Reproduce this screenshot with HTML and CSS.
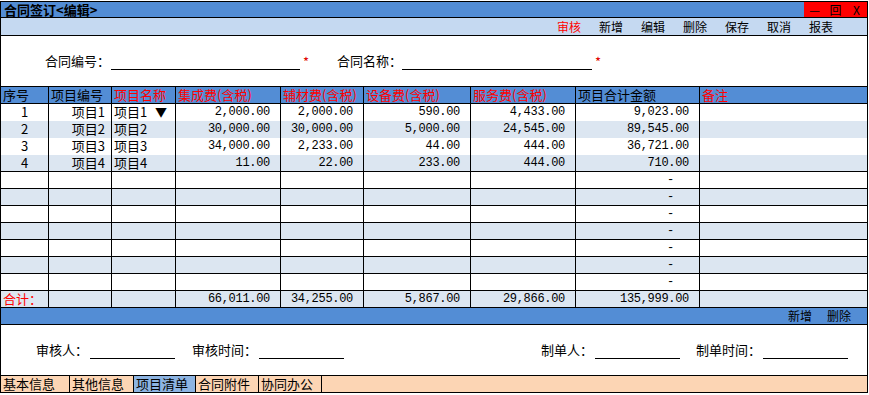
FILE: index.html
```html
<!DOCTYPE html>
<html lang="zh-CN">
<head>
  <meta charset="UTF-8">
  <title>合同签订</title>
  <link rel="stylesheet" href="styles.css">
</head>
<body>
  <div class="window">
    <div class="titlebar">
      <span class="title">合同签订&lt;编辑&gt;</span>
      <div class="winctl"><span>—</span><span>回</span><span>X</span></div>
    </div>

    <div class="toolbar">
      <span class="red">审核</span>
      <span>新增</span>
      <span>编辑</span>
      <span>删除</span>
      <span>保存</span>
      <span>取消</span>
      <span>报表</span>
    </div>

    <div class="form-head">
      <span class="label">合同编号：</span><span class="line w189"></span><span class="req">*</span>
      <span class="label f2">合同名称：</span><span class="line w190"></span><span class="req">*</span>
    </div>

    <div class="grid">
      <div class="row head">
        <div class="c">序号</div>
        <div class="c">项目编号</div>
        <div class="c red">项目名称</div>
        <div class="c red">集成费(含税)</div>
        <div class="c red">辅材费(含税)</div>
        <div class="c red">设备费(含税)</div>
        <div class="c red">服务费(含税)</div>
        <div class="c">项目合计金额</div>
        <div class="c red">备注</div>
      </div>
      <div class="row plain">
        <div class="c mid">1</div>
        <div class="c rt">项目1</div>
        <div class="c pick"><span>项目1</span><span class="arrow">▼</span></div>
        <div class="c num">2,000.00</div>
        <div class="c num">2,000.00</div>
        <div class="c num">590.00</div>
        <div class="c num">4,433.00</div>
        <div class="c num">9,023.00</div>
        <div class="c"></div>
      </div>
      <div class="row plain alt">
        <div class="c mid">2</div>
        <div class="c rt">项目2</div>
        <div class="c">项目2</div>
        <div class="c num">30,000.00</div>
        <div class="c num">30,000.00</div>
        <div class="c num">5,000.00</div>
        <div class="c num">24,545.00</div>
        <div class="c num">89,545.00</div>
        <div class="c"></div>
      </div>
      <div class="row plain">
        <div class="c mid">3</div>
        <div class="c rt">项目3</div>
        <div class="c">项目3</div>
        <div class="c num">34,000.00</div>
        <div class="c num">2,233.00</div>
        <div class="c num">44.00</div>
        <div class="c num">444.00</div>
        <div class="c num">36,721.00</div>
        <div class="c"></div>
      </div>
      <div class="row alt">
        <div class="c mid">4</div>
        <div class="c rt">项目4</div>
        <div class="c">项目4</div>
        <div class="c num">11.00</div>
        <div class="c num">22.00</div>
        <div class="c num">233.00</div>
        <div class="c num">444.00</div>
        <div class="c num">710.00</div>
        <div class="c"></div>
      </div>
      <div class="row">
        <div class="c"></div><div class="c"></div><div class="c"></div><div class="c"></div><div class="c"></div><div class="c"></div><div class="c"></div>
        <div class="c num dash">-</div><div class="c"></div>
      </div>
      <div class="row alt">
        <div class="c"></div><div class="c"></div><div class="c"></div><div class="c"></div><div class="c"></div><div class="c"></div><div class="c"></div>
        <div class="c num dash">-</div><div class="c"></div>
      </div>
      <div class="row">
        <div class="c"></div><div class="c"></div><div class="c"></div><div class="c"></div><div class="c"></div><div class="c"></div><div class="c"></div>
        <div class="c num dash">-</div><div class="c"></div>
      </div>
      <div class="row alt">
        <div class="c"></div><div class="c"></div><div class="c"></div><div class="c"></div><div class="c"></div><div class="c"></div><div class="c"></div>
        <div class="c num dash">-</div><div class="c"></div>
      </div>
      <div class="row">
        <div class="c"></div><div class="c"></div><div class="c"></div><div class="c"></div><div class="c"></div><div class="c"></div><div class="c"></div>
        <div class="c num dash">-</div><div class="c"></div>
      </div>
      <div class="row alt">
        <div class="c"></div><div class="c"></div><div class="c"></div><div class="c"></div><div class="c"></div><div class="c"></div><div class="c"></div>
        <div class="c num dash">-</div><div class="c"></div>
      </div>
      <div class="row">
        <div class="c"></div><div class="c"></div><div class="c"></div><div class="c"></div><div class="c"></div><div class="c"></div><div class="c"></div>
        <div class="c num dash">-</div><div class="c"></div>
      </div>
      <div class="row alt total">
        <div class="c red">合计：</div>
        <div class="c"></div>
        <div class="c"></div>
        <div class="c num">66,011.00</div>
        <div class="c num">34,255.00</div>
        <div class="c num">5,867.00</div>
        <div class="c num">29,866.00</div>
        <div class="c num">135,999.00</div>
        <div class="c"></div>
      </div>
    </div>

    <div class="subbar">
      <span>新增</span>
      <span>删除</span>
    </div>

    <div class="form-foot">
      <span class="label">审核人：</span><span class="line w85"></span>
      <span class="label g2">审核时间：</span><span class="line w85"></span>
      <span class="label g3">制单人：</span><span class="line w85"></span>
      <span class="label g4">制单时间：</span><span class="line w85"></span>
    </div>

    <div class="tabs">
      <div class="tab t1">基本信息</div>
      <div class="tab t2">其他信息</div>
      <div class="tab t3 on">项目清单</div>
      <div class="tab t4">合同附件</div>
      <div class="tab t5">协同办公</div>
    </div>
  </div>
</body>
</html>
```

FILE: styles.css
```css
body {
  margin: 0;
  background: #fff;
  font-family: "Noto Sans CJK SC", "Liberation Sans", sans-serif;
  font-size: 13px;
  color: #000;
}

.window {
  width: 868px;
  margin-top: 1px;
  border: 1px solid #000;
  box-sizing: border-box;
}

.red {
  color: #ff0000;
}

/* 标题栏 */
.titlebar {
  display: flex;
  justify-content: space-between;
  height: 15px;
  background: #538dd5;
  border-bottom: 1px solid #000;
}

.title {
  font-weight: bold;
  line-height: 15px;
  padding-left: 3px;
}

.winctl {
  display: flex;
  width: 63px;
  background: #ff0000;
  line-height: 15px;
  font-size: 12px;
}

.winctl span {
  width: 21px;
  text-align: center;
}

/* 工具栏 */
.toolbar {
  display: flex;
  justify-content: flex-end;
  gap: 18px;
  height: 17px;
  line-height: 17px;
  font-size: 12px;
  padding-right: 34px;
  background: #c5d9f1;
  border-bottom: 1px solid #000;
}

/* 表头字段 */
.form-head, .form-foot {
  display: flex;
  align-items: center;
  height: 50px;
  border-bottom: 1px solid #000;
}

.form-head {
  padding-left: 44px;
}

.form-foot {
  padding-left: 35px;
}

.label {
  line-height: 16px;
}

.line {
  height: 1px;
  margin-top: 16px;
  background: #000;
}

.w189 { width: 189px; margin-left: 1px; }
.w190 { width: 190px; margin-left: 0; }
.w85 { width: 85px; margin-left: 2px; }

.req {
  color: #e00000;
  margin-left: 3px;
  margin-top: 2px;
  line-height: 16px;
}

.f2 { margin-left: 28px; }
.g2 { margin-left: 17px; }
.g3 { margin-left: 197px; }
.g4 { margin-left: 16px; }

/* 明细表 */
.row {
  display: grid;
  grid-template-columns: 48px 63px 64px 105px 83px 107px 105px 124px 1fr;
  height: 17px;
  border-bottom: 1px solid #000;
  box-sizing: border-box;
  background: #fff;
}

.row.plain {
  border-bottom: none;
}

.row.alt {
  background: #dce6f1;
}

.row.head {
  background: #538dd5;
}

.c {
  border-right: 1px solid #000;
  line-height: 16px;
  padding-left: 2px;
  white-space: nowrap;
}

.c:last-child {
  border-right: none;
}

.mid {
  text-align: center;
  padding-left: 0;
}

.rt {
  text-align: right;
  padding-right: 6px;
}

.pick {
  display: flex;
  justify-content: space-between;
  padding-right: 8px;
}

.arrow {
  font-size: 12px;
}

.num {
  font-family: "Liberation Mono", monospace;
  font-size: 12px;
  letter-spacing: -0.3px;
  text-align: right;
  padding-right: 10px;
}

.dash {
  padding-right: 25px;
}

/* 明细操作栏 */
.subbar {
  display: flex;
  justify-content: flex-end;
  gap: 15px;
  height: 16px;
  line-height: 16px;
  font-size: 12px;
  padding-right: 16px;
  background: #538dd5;
  border-bottom: 1px solid #000;
}

/* 底部页签 */
.tabs {
  display: flex;
  height: 16px;
  background: #fcd5b4;
}

.tab {
  line-height: 16px;
  padding-left: 2px;
  border-right: 1px solid #000;
  box-sizing: border-box;
}

.t1 { width: 69px; }
.t2 { width: 64px; }
.t3 { width: 62px; }
.t4 { width: 63px; }
.t5 { width: 63px; }

.tab.on {
  background: #8db4e2;
}
```
